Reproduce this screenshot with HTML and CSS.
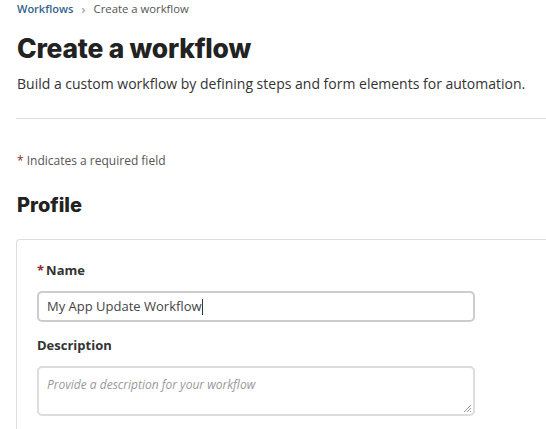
FILE: index.html
```html
<!DOCTYPE html>
<html>
<head>
<meta charset="utf-8">
<link rel="stylesheet" href="styles.css">
</head>
<body>
<div class="page">
  <nav class="crumbs">
    <a class="crumb-link">Workflows</a>
    <span class="crumb-sep">&#8250;</span>
    <span class="crumb-current">Create a workflow</span>
  </nav>
  <h1 class="title">Create a workflow</h1>
  <p class="subtitle">Build a custom workflow by defining steps and form elements for automation.</p>
  <hr class="divider">
  <p class="required-note"><span class="star">*</span> Indicates a required field</p>
  <h2 class="section-title">Profile</h2>
  <div class="card">
    <label class="field-label"><span class="req">*</span>Name</label>
    <div class="input">My App Update Workflow<span class="caret"></span></div>
    <label class="field-label desc-label">Description</label>
    <div class="textarea">
      <span class="placeholder">Provide a description for your workflow</span>
      <svg class="grip" width="9" height="9" viewBox="0 0 9 9"><path d="M8 1 L1 8 M8 4 L4 8 M8 7 L7 8" stroke="#888" stroke-width="0.9" fill="none"/></svg>
    </div>
  </div>
</div>
</body>
</html>
```

FILE: styles.css
```css
html, body {
  margin: 0;
  padding: 0;
  background: #fff;
}
body {
  font-family: "Open Sans", "Liberation Sans", sans-serif;
  color: #333;
}
.page {
  padding: 0 0 0 16px;
  height: 429px;
  overflow: hidden;
}
.crumbs {
  display: flex;
  align-items: center;
  gap: 8px;
  height: 17px;
  font-size: 11px;
  padding-left: 1px;
}
.crumb-link {
  color: #34618c;
  font-weight: 600;
}
.crumb-sep {
  color: #aaa;
  font-size: 13px;
  font-weight: 600;
}
.crumb-current {
  color: #555;
  font-size: 11.3px;
}
.title {
  margin: 15px 0 0;
  padding-left: 1px;
  font-family: "Inter", sans-serif;
  font-weight: 800;
  font-size: 26.4px;
  line-height: 32px;
  color: #222;
  letter-spacing: -0.2px;
}
.subtitle {
  margin: 10px 0 0;
  padding-left: 1px;
  font-size: 14px;
  line-height: 20px;
  color: #333;
}
.divider {
  margin: 24px 0 0;
  border: 0;
  border-top: 1px solid #ddd;
  height: 0;
}
.required-note {
  margin: 33px 0 0;
  padding-left: 1px;
  font-size: 12px;
  line-height: 18px;
  color: #555;
}
.star {
  color: #7a3030;
}
.section-title {
  margin: 22px 0 0;
  padding-left: 1px;
  font-family: "Inter", sans-serif;
  font-weight: 800;
  font-size: 20px;
  line-height: 26px;
  color: #222;
}
.card {
  margin-top: 21px;
  border: 1px solid #ddd;
  border-right: 0;
  border-bottom: 0;
  border-top-left-radius: 4px;
  padding: 21px 0 20px 20px;
  height: 200px;
}
.field-label {
  display: block;
  font-size: 13px;
  font-weight: 700;
  color: #333;
  line-height: 18px;
}
.req {
  color: #8a2d2d;
  margin-right: 2px;
}
.input {
  margin-top: 12px;
  width: 418px;
  height: 27px;
  border: 2px solid #ccc;
  border-radius: 5px;
  padding: 0 8px;
  font-size: 13px;
  line-height: 27px;
  color: #444;
  display: flex;
  align-items: center;
}
.caret {
  display: inline-block;
  width: 1px;
  height: 16px;
  background: #333;
}
.desc-label {
  margin-top: 14px;
}
.textarea {
  position: relative;
  margin-top: 12px;
  width: 418px;
  height: 38px;
  border: 2px solid #ddd;
  border-radius: 5px;
  padding: 4px 8px;
}
.placeholder {
  font-size: 12px;
  font-style: italic;
  color: #999;
  line-height: 16px;
}
.grip {
  position: absolute;
  right: 1px;
  bottom: 1px;
}
```
